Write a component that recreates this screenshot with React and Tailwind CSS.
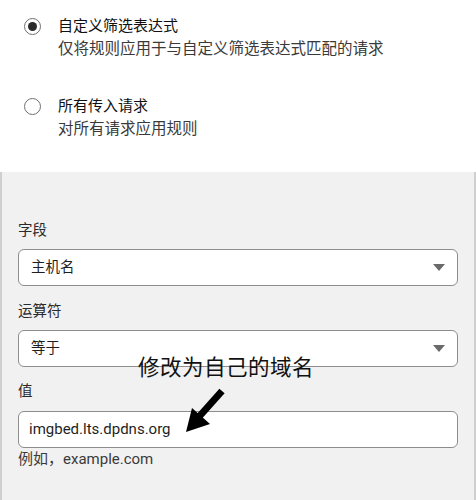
import React from 'react';

const FONT = { fontFamily: 'Roboto, "Noto Sans CJK SC", sans-serif' };

function Radio({ checked }) {
  return (
    <div className="w-[17px] h-[17px] rounded-full border-[1.5px] border-[#6f6f6f] flex items-center justify-center shrink-0 bg-white">
      {checked && <div className="w-[9px] h-[9px] rounded-full bg-[#2b2b2b]" />}
    </div>
  );
}

function Option({ checked, title, desc }) {
  return (
    <div className="flex items-start pl-6">
      <div className="pt-[2px]">
        <Radio checked={checked} />
      </div>
      <div className="ml-[17px]">
        <div className="text-[15px] leading-[20px] text-[#111]">{title}</div>
        <div className="text-[15.5px] leading-[20px] text-[#3a3a3a] mt-[3px]">{desc}</div>
      </div>
    </div>
  );
}

function Select({ value }) {
  return (
    <div className="h-[37px] bg-white border border-[#8d8d8d] rounded-[6px] flex items-center justify-between pl-3 pr-[12px]">
      <span className="text-[14.5px] text-[#1f1f1f]">{value}</span>
      <svg width="12" height="7" viewBox="0 0 12 7">
        <path d="M0 0 H12 L6 7 Z" fill="#6a6a6a" />
      </svg>
    </div>
  );
}

export default function App() {
  return (
    <div className="w-[476px] h-[500px] bg-white overflow-hidden relative" style={FONT}>
      {/* Scope options */}
      <div className="pt-[16px] h-[172px] flex flex-col gap-[37px]">
        <Option checked title="自定义筛选表达式" desc="仅将规则应用于与自定义筛选表达式匹配的请求" />
        <Option title="所有传入请求" desc="对所有请求应用规则" />
      </div>

      {/* Expression panel */}
      <div className="h-[328px] bg-[#f1f1f1] border-l-2 border-r-2 border-[#cfcfcf] px-[16px] pt-[49px]">
        <div className="text-[14.5px] leading-[20px] text-[#2a2a2a]">字段</div>
        <div className="mt-[8px]">
          <Select value="主机名" />
        </div>
        <div className="text-[14.5px] leading-[20px] text-[#2a2a2a] mt-[16px]">运算符</div>
        <div className="mt-[8px]">
          <Select value="等于" />
        </div>
        <div className="text-[14.5px] leading-[20px] text-[#2a2a2a] mt-[15px]">值</div>
        <div className="mt-[9px] h-[37px] bg-white border border-[#8d8d8d] rounded-[6px] flex items-center pl-[10px]">
          <span className="text-[15px] text-[#1f1f1f]">imgbed.lts.dpdns.org</span>
        </div>
        <div className="text-[15px] leading-[20px] text-[#3a3a3a] mt-[1px]">例如，example.com</div>
      </div>

      {/* Annotation overlay */}
      <div className="absolute left-[138px] top-[354px] text-[21.5px] leading-[28px] text-[#111] tracking-[0.5px]">
        修改为自己的域名
      </div>
      <svg className="absolute left-[180px] top-[386px]" width="50" height="52" viewBox="0 0 50 52">
        <line x1="42" y1="5" x2="17" y2="33" stroke="#000" strokeWidth="7" />
        <polygon points="6,46 12,22 30,38" fill="#000" />
      </svg>
    </div>
  );
}
